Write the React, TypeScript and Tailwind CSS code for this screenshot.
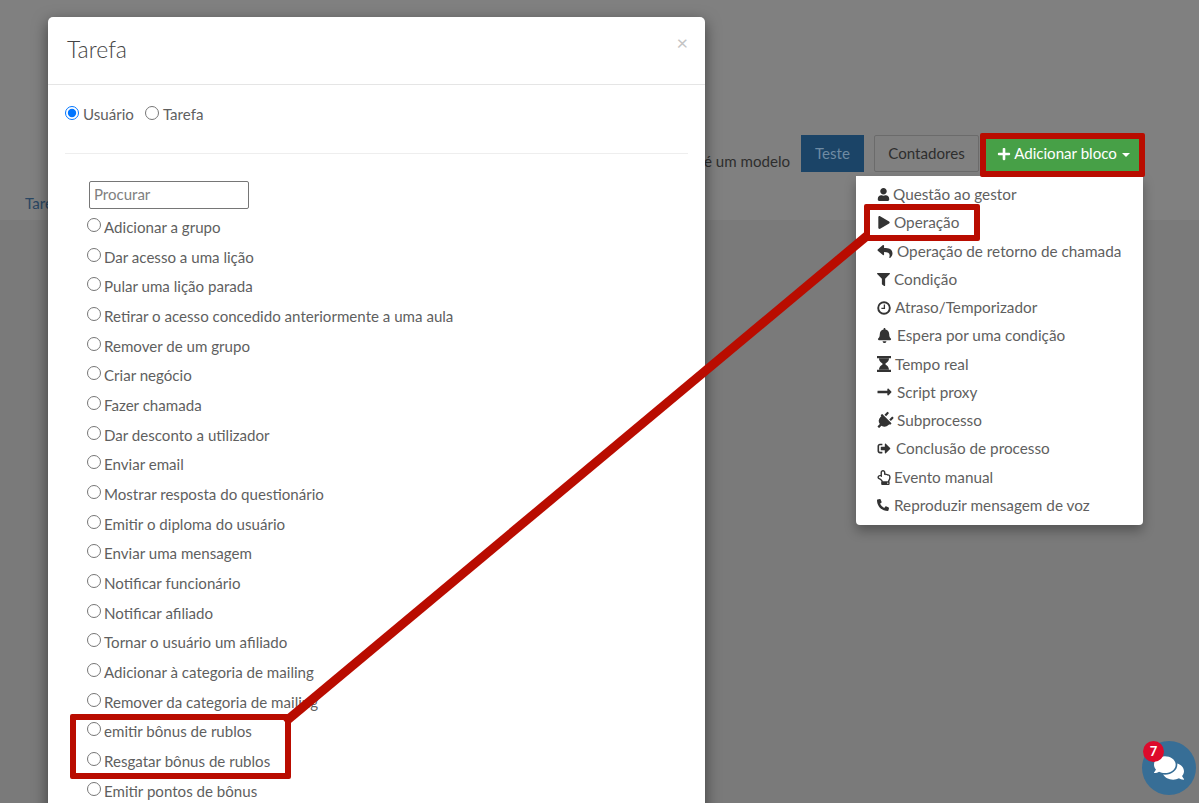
import { FaPlus, FaUser, FaPlay, FaReply, FaFilter, FaBell, FaLongArrowAltRight, FaPlug, FaSignOutAlt, FaRegHandPointUp, FaPhoneAlt, FaComments } from "react-icons/fa";

const actions = [
  "Adicionar a grupo",
  "Dar acesso a uma lição",
  "Pular uma lição parada",
  "Retirar o acesso concedido anteriormente a uma aula",
  "Remover de um grupo",
  "Criar negócio",
  "Fazer chamada",
  "Dar desconto a utilizador",
  "Enviar email",
  "Mostrar resposta do questionário",
  "Emitir o diploma do usuário",
  "Enviar uma mensagem",
  "Notificar funcionário",
  "Notificar afiliado",
  "Tornar o usuário um afiliado",
  "Adicionar à categoria de mailing",
  "Remover da categoria de mailing",
  "emitir bônus de rublos",
  "Resgatar bônus de rublos",
  "Emitir pontos de bônus",
];

function ClockIcon() {
  return (
    <svg viewBox="0 0 14 14" className="h-[14px] w-[14px]" fill="none" stroke="currentColor">
      <circle cx="7" cy="7" r="5.8" strokeWidth="1.9" />
      <path d="M7.4 3.6V7.4H4.4" strokeWidth="1.3" />
    </svg>
  );
}

function HourglassIcon() {
  return (
    <svg viewBox="0 0 14 16" className="h-[16px] w-[14px]" fill="currentColor">
      <path d="M0 0h14v2.2H0zM0 13.8h14V16H0z" />
      <path d="M2 2.2h10C12 5.500 9.200 6.800 8.200 8c1 1.200 3.800 2.500 3.800 5.800H2C2 10.500 4.800 9.200 5.800 8 4.800 6.800 2 5.500 2 2.200z" />
    </svg>
  );
}

const blocks = [
  { icon: <FaUser className="h-[13px] w-[13px]" />, label: "Questão ao gestor", gap: "gap-[3px]" },
  { icon: <FaPlay className="h-[13px] w-[14px]" />, label: "Operação", gap: "gap-[3px]" },
  { icon: <FaReply className="h-[15px] w-[16px]" />, label: "Operação de retorno de chamada", gap: "gap-[4px]" },
  { icon: <FaFilter className="h-[13px] w-[13px]" />, label: "Condição", gap: "gap-[4px]" },
  { icon: <ClockIcon />, label: "Atraso/Temporizador", gap: "gap-[4px]" },
  { icon: <FaBell className="h-[15px] w-[15px]" />, label: "Espera por uma condição", gap: "gap-[5px]" },
  { icon: <HourglassIcon />, label: "Tempo real", gap: "gap-[4px]" },
  { icon: <FaLongArrowAltRight className="h-[16px] w-[15px]" />, label: "Script proxy", gap: "gap-[5px]" },
  { icon: <FaPlug className="h-[18px] w-[15px] rotate-45" />, label: "Subprocesso", gap: "gap-[5px]" },
  { icon: <FaSignOutAlt className="h-[13px] w-[14px]" />, label: "Conclusão de processo", gap: "gap-[5px]" },
  { icon: <FaRegHandPointUp className="h-[15px] w-[14px]" />, label: "Evento manual", gap: "gap-[3px]" },
  { icon: <FaPhoneAlt className="h-[12px] w-[12px]" />, label: "Reproduzir mensagem de voz", gap: "gap-[5px]" },
];

export default function App() {
  return (
    <div className="relative h-[803px] w-[1199px] overflow-hidden bg-[#7a7a7a] font-['Lato','Liberation_Sans',sans-serif] text-[15.1px] text-[#5f5f5f]">
      {/* Page behind the backdrop */}
      <div className="h-[220px] bg-[#808080] pt-[135px]">
        <div className="flex items-start justify-end pr-[52px]">
          <span className="mr-[11px] mt-[15px] text-[#2e2e2e]">é um modelo</span>
          <button className="mr-[10px] h-[37px] w-[63px] bg-[#1b4467] text-[#6f8ba3]">Teste</button>
          <button className="mr-[8px] h-[37px] w-[105px] rounded-[2px] border border-[#6b6b6b] text-[#2e2e2e]">Contadores</button>
          <div className="w-[160px]" />
        </div>
        <div className="pl-[25px] pt-[19px] text-[#2a4763]">Tarefas</div>
      </div>

      {/* Modal */}
      <div className="absolute left-[48px] top-[17px] h-[830px] w-[657px] rounded-[5px] bg-white shadow-[0_5px_15px_rgba(0,0,0,0.5)]">
        <div className="relative h-[68px] border-b border-[#e5e5e5] pl-[19px] pt-[16px] text-[23px] font-light leading-[32px] text-[#444]">
          Tarefa
          <span className="absolute right-[17px] top-[9px] text-[20px] font-normal text-[#c4c4c4]">×</span>
        </div>
        <div className="mx-[17px] flex h-[69px] items-start gap-[11px] border-b border-[#eeeeee] pt-[18px]">
          <label className="flex items-center gap-[4px]">
            <input type="radio" name="kind" defaultChecked className="mb-[3px] h-[14px] w-[14px]" />
            Usuário
          </label>
          <label className="flex items-center gap-[4px]">
            <input type="radio" name="kind" className="mb-[3px] h-[14px] w-[14px]" />
            Tarefa
          </label>
        </div>
        <div className="pl-[39px] pt-[27px]">
          <input
            placeholder="Procurar"
            className="mb-[3px] ml-[2px] block h-[28px] w-[160px] rounded-[2px] border border-[#767676] px-[4px] pb-[2px] text-[15px] placeholder:text-[#808080]"
          />
          {actions.map((a) => (
            <label key={a} className="flex h-[29.68px] items-center gap-[3px] pt-[1px]">
              <input type="radio" name="action" className="mb-[5px] h-[14px] w-[14px]" />
              {a}
            </label>
          ))}
        </div>
      </div>

      {/* Dropdown */}
      <div className="absolute left-[856px] top-[176px] h-[349px] w-[287px] rounded-b-[4px] bg-white pl-[21px] pt-[4.5px] text-[15.3px] shadow-[0_6px_12px_rgba(0,0,0,0.3)]">
        {blocks.map((b) => (
          <div key={b.label} className={`flex h-[28.25px] items-center ${b.gap}`}>
            <span className="flex justify-center text-[#333]">{b.icon}</span>
            {b.label}
          </div>
        ))}
      </div>

      {/* Annotation line and frames */}
      <svg className="absolute left-0 top-0 h-[803px] w-[1199px]" viewBox="0 0 1199 803">
        <line x1="868" y1="235" x2="285" y2="722" stroke="#b90c00" strokeWidth="9" />
      </svg>
      <div className="absolute left-[980px] top-[133px] flex h-[44px] w-[165px] items-center justify-center gap-[3px] rounded-[2px] border-[6px] border-[#b90c00] bg-[#47a047] pb-[3px] pl-[2px] text-white">
        <FaPlus className="h-[14px] w-[14px]" />
        Adicionar bloco
        <span className="ml-[2px] mt-[2px] h-0 w-0 border-x-[4px] border-t-[4px] border-x-transparent border-t-white" />
      </div>
      <div className="absolute left-[864px] top-[204px] h-[37px] w-[116px] rounded-[2px] border-[6px] border-[#b90c00]" />
      <div className="absolute left-[70px] top-[714px] h-[65px] w-[221px] rounded-[2px] border-[6px] border-[#b90c00]" />

      {/* Chat widget */}
      <div className="absolute left-[1142px] top-[741px] flex h-[54px] w-[54px] items-center justify-center rounded-full bg-[#376e96] text-white">
        <FaComments className="h-[30px] w-[30px]" />
      </div>
      <div className="absolute left-[1143px] top-[741px] flex h-[21px] w-[21px] items-center justify-center rounded-full bg-[#dd0a2b] text-[13px] font-bold text-white">
        7
      </div>
    </div>
  );
}
